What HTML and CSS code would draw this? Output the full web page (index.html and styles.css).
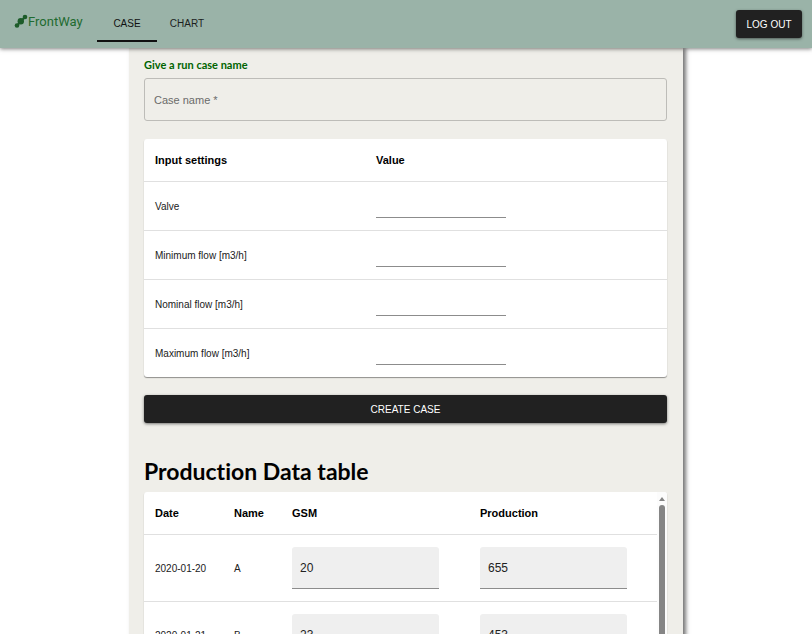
FILE: index.html
```html
<!DOCTYPE html>
<html lang="en">
<head>
<meta charset="utf-8">
<meta name="viewport" content="width=device-width, initial-scale=1">
<title>FrontWay</title>
<link rel="stylesheet" href="styles.css">
</head>
<body>
<header class="topbar">
  <a class="brand" href="#">
    <svg class="brand-mark" viewBox="0 0 14 16" aria-hidden="true">
      <path d="M3 12.500 11 4" stroke="#1d5c2a" stroke-width="2"/>
      <circle cx="3" cy="12.500" r="2.300"/>
      <circle cx="6.800" cy="8.200" r="3.200"/>
      <circle cx="11" cy="4" r="2.300"/>
    </svg>
    <span>FrontWay</span>
  </a>
  <nav class="tabs">
    <a class="tab tab-active" href="#case">CASE</a>
    <a class="tab" href="#chart">CHART</a>
  </nav>
  <button class="btn logout" type="button">LOG OUT</button>
</header>
<main class="page">
  <form class="paper">
    <label class="form-title" for="case-name">Give a run case name</label>
    <input class="case-name" id="case-name" type="text" placeholder="Case name *" required>
    <div class="card">
      <table class="settings">
        <thead>
          <tr><th class="col-setting">Input settings</th><th>Value</th></tr>
        </thead>
        <tbody>
          <tr><td><label for="valve">Valve</label></td><td><input class="line-input" id="valve" type="text"></td></tr>
          <tr><td><label for="min-flow">Minimum flow [m3/h]</label></td><td><input class="line-input" id="min-flow" type="text"></td></tr>
          <tr><td><label for="nom-flow">Nominal flow [m3/h]</label></td><td><input class="line-input" id="nom-flow" type="text"></td></tr>
          <tr><td><label for="max-flow">Maximum flow [m3/h]</label></td><td><input class="line-input" id="max-flow" type="text"></td></tr>
        </tbody>
      </table>
    </div>
    <button class="btn create" type="button">CREATE CASE</button>
    <h1 class="section-title">Production Data table</h1>
    <div class="card data-card">
      <table class="data">
        <thead>
          <tr><th class="col-date">Date</th><th class="col-name">Name</th><th class="col-gsm">GSM</th><th>Production</th></tr>
        </thead>
        <tbody>
          <tr>
            <td>2020-01-20</td><td>A</td>
            <td><input class="filled-input" type="text" aria-label="GSM A" value="20"></td>
            <td><input class="filled-input" type="text" aria-label="Production A" value="655"></td>
          </tr>
          <tr>
            <td>2020-01-21</td><td>B</td>
            <td><input class="filled-input" type="text" aria-label="GSM B" value="23"></td>
            <td><input class="filled-input" type="text" aria-label="Production B" value="453"></td>
          </tr>
        </tbody>
      </table>
      <div class="scrollbar" aria-hidden="true">
        <span class="scroll-arrow"></span>
        <span class="scroll-thumb"></span>
      </div>
    </div>
  </form>
</main>
</body>
</html>
```
FILE: styles.css
```css
* {
  box-sizing: border-box;
}

body {
  display: flex;
  flex-direction: column;
  height: 100vh;
  margin: 0;
  background: #fff;
  color: #212121;
  font-family: "Liberation Sans", Arial, sans-serif;
  font-size: 10px;
}

input,
button {
  font-family: inherit;
  color: inherit;
}

.topbar {
  z-index: 1;
  display: flex;
  flex: none;
  align-items: center;
  height: 48px;
  padding: 0 10px 0 14px;
  background: #9ab3a8;
  box-shadow: 0 1px 4px rgba(0, 0, 0, 0.5);
}

.brand {
  display: flex;
  align-items: center;
  width: 83px;
  padding-bottom: 6px;
  color: #1f6b30;
  font-family: Roboto, "Open Sans", sans-serif;
  font-size: 13px;
  text-decoration: none;
}

.brand-mark {
  flex: none;
  width: 14px;
  height: 16px;
  fill: #1d5c2a;
}

.tabs {
  display: flex;
  align-self: flex-start;
}

.tab {
  display: flex;
  align-items: center;
  justify-content: center;
  width: 60px;
  height: 42px;
  padding-top: 6px;
  border-bottom: 2px solid transparent;
  color: #1c1f1e;
  text-decoration: none;
}

.tab-active {
  border-bottom-color: #111;
  color: #111;
}

.btn {
  border: 0;
  border-radius: 3px;
  background: #212121;
  box-shadow: 0 1px 3px rgba(0, 0, 0, 0.5);
  color: #fff;
  font-size: 10px;
}

.logout {
  width: 66px;
  height: 28px;
  margin-left: auto;
  padding: 0;
}

.page {
  flex: 1;
  min-height: 0;
  overflow: hidden;
  padding: 0 129px;
}

.paper {
  display: flex;
  flex-direction: column;
  padding: 8px 16px 16px 15px;
  background: #efeee9;
  box-shadow: 3px 0 4px #777;
}

.form-title {
  margin-bottom: 4px;
  color: #006400;
  font-family: Lato, "Open Sans", sans-serif;
  font-size: 11px;
  font-weight: 700;
  line-height: 18px;
}

.case-name {
  width: 100%;
  height: 43px;
  margin-bottom: 18px;
  padding: 0 9px;
  border: 1px solid #bdbcb8;
  border-radius: 3px;
  background: transparent;
  font-size: 11px;
}

.case-name::placeholder {
  color: #6b6b69;
  opacity: 1;
}

.card {
  border-radius: 3px;
  background: #fff;
  box-shadow: 0 1px 1px rgba(0, 0, 0, 0.4);
}

table {
  width: 100%;
  border-spacing: 0;
  table-layout: fixed;
}

th,
td {
  padding: 0 0 0 11px;
  border-bottom: 1px solid #e0e0e0;
  text-align: left;
}

th {
  height: 43px;
  color: #000;
  font-size: 11px;
}

.settings td {
  height: 49px;
}

.settings tbody tr:last-child td {
  height: 48px;
  border-bottom: 0;
}

.col-setting {
  width: 221px;
}

.line-input {
  display: block;
  width: 130px;
  height: 24px;
  padding: 0;
  border: 0;
  border-bottom: 1px solid #8c8c8c;
  background: transparent;
}

.create {
  height: 28px;
  margin-top: 18px;
}

.section-title {
  margin: 32px 0 5px;
  color: #000;
  font-family: Lato, "Open Sans", sans-serif;
  font-size: 23px;
  font-weight: 700;
  font-variant-ligatures: none;
  line-height: 32px;
}

.data-card {
  display: flex;
  overflow: hidden;
}

.data {
  flex: 1;
}

.data td {
  height: 67px;
}

.col-date {
  width: 79px;
}

.col-name {
  width: 58px;
}

.col-gsm {
  width: 188px;
}

.filled-input {
  display: block;
  width: 147px;
  height: 42px;
  padding: 0 8px;
  border: 0;
  border-bottom: 1px solid #8c8c8c;
  border-radius: 3px 3px 0 0;
  background: #efefef;
  font-size: 12px;
}

.scrollbar {
  display: flex;
  flex-direction: column;
  align-items: center;
  width: 10px;
  padding-top: 5px;
  background: #fcfcfc;
}

.scroll-arrow {
  border: 3px solid transparent;
  border-top: 0;
  border-bottom: 4px solid #858585;
}

.scroll-thumb {
  flex: 1;
  width: 6px;
  margin-top: 4px;
  border-radius: 3px 3px 0 0;
  background: #858585;
}
```
